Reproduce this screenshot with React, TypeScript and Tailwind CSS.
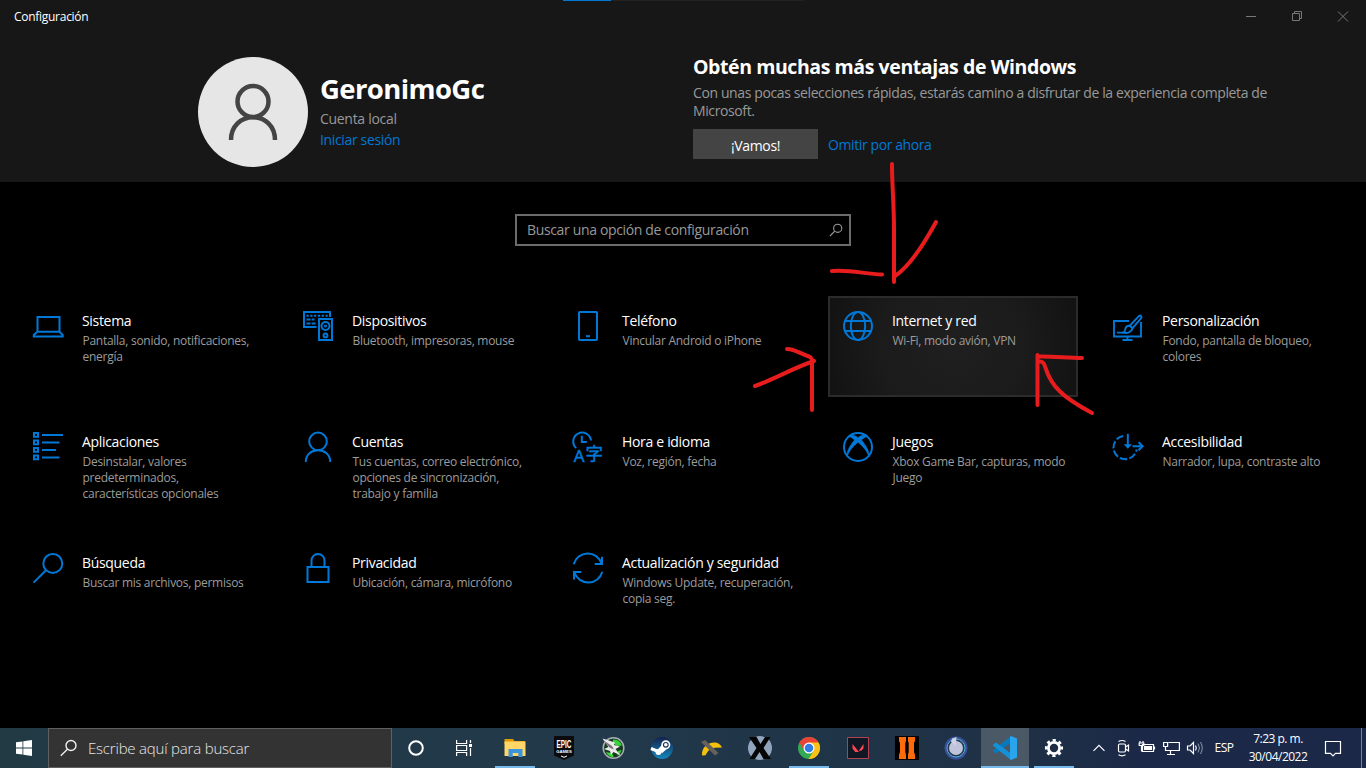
import React from "react";

const Svg = ({ children, sw = 2 }: { children: React.ReactNode; sw?: number }) => (
  <svg className="block h-8 w-8 shrink-0 overflow-visible text-[#0078d7]" viewBox="0 0 32 32" fill="none" stroke="currentColor" strokeWidth={sw}>
    {children}
  </svg>
);

const icons: Record<string, React.ReactNode> = {
  laptop: (
    <Svg>
      <path d="M5.500 22V7h22v15M5.200 21.800h22.300l3.200 3.200v1.500H1.800v-1.500z" />
    </Svg>
  ),
  devices: (
    <Svg>
      <path d="M14.500 17H2V2h26v5" />
      <path d="M4.500 5.800h22" strokeDasharray="2.200 1.600" />
      <path d="M4.500 9.500h8M4.500 13.400h9" strokeDasharray="4 1.200" />
      <path d="M17 9h13v21H17z" />
      <circle cx="23.500" cy="16" r="4" />
      <circle cx="23.500" cy="16" r=".6" />
      <circle cx="23.500" cy="25.400" r="1.900" />
    </Svg>
  ),
  phone: (
    <Svg>
      <rect x="7" y="2" width="18" height="28" rx=".8" />
      <path d="M14 26.200h4" />
    </Svg>
  ),
  globe: (
    <Svg>
      <circle cx="16" cy="16" r="14" />
      <ellipse cx="16" cy="16" rx="7.200" ry="14" />
      <path d="M3 11h26M3 21h26" />
    </Svg>
  ),
  personalize: (
    <Svg sw={1.9}>
      <path d="M17 11H2v15.500h27V12M15.500 26.500v4M10.500 30h10M5 22.600h6" />
      <path d="M18 15.500 26.800 6.200c2-1.600 3.600.5 2.200 2.200l-8.400 9.800z" />
      <path d="M17.800 15.800c-3-.3-4.300 1.600-4.600 3.800-.2 1.600-1.200 2.600-2.400 3 4.200 1 8.900-.1 9.600-4.400z" />
    </Svg>
  ),
  apps: (
    <Svg>
      <path d="M2 2h4v3.800H2zM2 9.500h4v3.800H2zM2 17h4v3.800H2zM2 24.500h4v3.800H2zM10 4h21M10 11.500h17.500M10 19h14M10 26.500h17.500" />
    </Svg>
  ),
  person: (
    <Svg>
      <circle cx="16" cy="10.400" r="8.800" />
      <path d="M3.800 31C3.800 23.500 9.500 19.300 16 19.300S28.200 23.500 28.200 31" />
    </Svg>
  ),
  time: (
    <Svg>
      <path d="M4.200 17.100A8.900 8.900 0 1 1 19 9.500M9.800 4.800v6.200h5" />
      <text x="1.800" y="30.500" fontSize="17" fill="currentColor" stroke="currentColor" strokeWidth=".6" fontFamily="Open Sans, sans-serif">A</text>
      <text x="13.600" y="29" fontSize="17.500" fill="currentColor" stroke="currentColor" strokeWidth=".5" fontFamily="Noto Sans CJK JP, sans-serif">字</text>
    </Svg>
  ),
  xbox: (
    <Svg>
      <circle cx="16" cy="16" r="14" />
      <path d="M7 4.500c3-1 6.500 0 9 2.200 2.500-2.200 6-3.200 9-2.200l.5 1.300c-1.800-.3-4 1-6 3.300 4.500 5.400 8.200 11.500 7.400 16.700C25.500 20.500 20.500 14.900 16 11.300 11.500 14.900 6.500 20.500 5.100 25.800 4.300 20.600 8 14.500 12.500 9.100c-2-2.300-4.200-3.600-6-3.300z" fill="currentColor" strokeWidth=".6" />
    </Svg>
  ),
  access: (
    <Svg>
      <path d="M11.200 4.900A11.700 11.700 0 1 0 24.700 18.500" strokeDasharray="7.500 2.200" />
      <path d="M15.800 2.800v12.400" />
      <path d="M11.600 13.200h8.400L15.800 17.700z" fill="currentColor" stroke="none" />
      <path d="M20.500 15.200h8M26.600 11.200l4 4-4 4" />
    </Svg>
  ),
  search: (
    <Svg>
      <circle cx="20.800" cy="11.400" r="9.500" />
      <path d="m14 18.200-12.400 12.400" />
    </Svg>
  ),
  lock: (
    <Svg>
      <path d="M5.500 15h21v15h-21zM9.500 15V8.500a6.500 6.500 0 0 1 13 0V15" />
    </Svg>
  ),
  update: (
    <Svg>
      <path d="M1.700 12.200A14.500 14.500 0 0 1 29.500 11.500M30 4.800V12h-7.300M30.300 19.800A14.500 14.500 0 0 1 2.500 20.500M2 27.500V20h7.300" />
    </Svg>
  ),
};

type Tile = { icon: string; title: string; desc: string[]; active?: boolean };

const tiles: Tile[] = [
  { icon: "laptop", title: "Sistema", desc: ["Pantalla, sonido, notificaciones,", "energía"] },
  { icon: "devices", title: "Dispositivos", desc: ["Bluetooth, impresoras, mouse"] },
  { icon: "phone", title: "Teléfono", desc: ["Vincular Android o iPhone"] },
  { icon: "globe", title: "Internet y red", desc: ["Wi-Fi, modo avión, VPN"], active: true },
  { icon: "personalize", title: "Personalización", desc: ["Fondo, pantalla de bloqueo,", "colores"] },
  { icon: "apps", title: "Aplicaciones", desc: ["Desinstalar, valores", "predeterminados,", "características opcionales"] },
  { icon: "person", title: "Cuentas", desc: ["Tus cuentas, correo electrónico,", "opciones de sincronización,", "trabajo y familia"] },
  { icon: "time", title: "Hora e idioma", desc: ["Voz, región, fecha"] },
  { icon: "xbox", title: "Juegos", desc: ["Xbox Game Bar, capturas, modo", "Juego"] },
  { icon: "access", title: "Accesibilidad", desc: ["Narrador, lupa, contraste alto"] },
  { icon: "search", title: "Búsqueda", desc: ["Buscar mis archivos, permisos"] },
  { icon: "lock", title: "Privacidad", desc: ["Ubicación, cámara, micrófono"] },
  { icon: "update", title: "Actualización y seguridad", desc: ["Windows Update, recuperación,", "copia seg."] },
];

function SettingTile({ tile }: { tile: Tile }) {
  return (
    <div
      className={
        tile.active
          ? "-ml-px mr-px flex h-[101px] border-2 border-[#2b2b2b] bg-[radial-gradient(circle_at_50%_50%,#1f1f1f_0%,#1b1b1b_55%,#121212_100%)] pt-3 pl-3"
          : "flex h-[101px] pt-3.5 pl-[13px]"
      }
    >
      {icons[tile.icon]}
      <div className="ml-[18px] whitespace-nowrap">
        <div className="pt-px text-[14px] leading-5 tracking-[-0.32px] text-white">{tile.title}</div>
        <div className="mt-0.5 pl-[0.5px] text-[12px] leading-4 tracking-[-0.27px] text-[#9c9c9c]">
          {tile.desc.map((line) => (
            <div key={line}>{line}</div>
          ))}
        </div>
      </div>
    </div>
  );
}

function Header() {
  return (
    <header className="flex h-[182px] flex-col bg-[#171717]">
      <div className="flex h-8 items-start">
        <span className="w-[563px] pt-[9px] pl-3.5 text-[12px] leading-4 tracking-[-0.28px] text-white">Configuración</span>
        <div className="flex h-0.5 w-[241px]">
          <div className="h-px w-12 bg-[#0078d7]" />
          <div className="h-px flex-1 bg-[#222]" />
        </div>
        <svg className="ml-auto h-8 w-[138px]" viewBox="0 0 138 32" fill="none" stroke="#777" strokeWidth="1">
          <path d="M18 16.500h10M64.500 13.500h7v7h-7zM66.500 13.500v-2h7v7h-2M110 11.500l10 10M120 11.500l-10 10" />
        </svg>
      </div>
      <div className="flex pl-[198px]">
        <div className="mt-[25px] h-[110px] w-[110px] rounded-full bg-[#e6e6e6]">
          <svg viewBox="0 0 110 110" fill="none" stroke="#444" strokeWidth="4.500">
            <circle cx="55" cy="44.500" r="15.500" />
            <path d="M33 83c0-14 10-22.800 22-22.800S77 69 77 83" />
          </svg>
        </div>
        <div className="w-[385px] pt-[37px] pl-3">
          <div className="text-[27.5px] leading-10 font-bold tracking-[-0.6px] text-white">GeronimoGc</div>
          <div className="mt-px text-[14px] leading-[18px] tracking-[-0.3px] text-[#999]">Cuenta local</div>
          <div className="mt-[3px] text-[14px] leading-[18px] tracking-[-0.35px] text-[#0078d7]">Iniciar sesión</div>
        </div>
        <div className="pt-5 whitespace-nowrap">
          <div className="text-[19.5px] leading-[30px] font-bold tracking-[-0.42px] text-white">Obtén muchas más ventajas de Windows</div>
          <div className="mt-0.5 text-[14px] leading-[18px] tracking-[-0.385px] text-[#999]">
            <div>Con unas pocas selecciones rápidas, estarás camino a disfrutar de la experiencia completa de</div>
            <div>Microsoft.</div>
          </div>
          <div className="mt-[9px] flex items-center">
            <button className="h-[30px] w-[125px] bg-[#444] pt-0.5 text-[14px] tracking-[-0.35px] text-white">¡Vamos!</button>
            <a className="ml-2.5 text-[14px] tracking-[-0.4px] text-[#0078d7]">Omitir por ahora</a>
          </div>
        </div>
      </div>
    </header>
  );
}

const appIcons: { name: string; bar?: boolean; active?: boolean; art: React.ReactNode }[] = [
  {
    name: "explorer",
    bar: true,
    art: (
      <>
        <path d="M1.500 3h8.500l1.500 2H22v3H1.500z" fill="#e09a00" />
        <path d="M1.500 5.500h21V20h-21z" fill="#ffd667" />
        <path d="M5.500 21v-8h14v8h-4.200v-4h-5.600v4z" fill="#3a95dc" />
      </>
    ),
  },
  {
    name: "epic",
    art: (
      <>
        <path d="M2.500 0h19Q22 0 22 1v18.500L12 24 2 19.500V1q0-1 .5-1z" fill="#0b0b0d" />
        <text x="0" y="0" transform="translate(12 11.800) scale(.8 1.300)" textAnchor="middle" fontSize="8" fontWeight="700" fill="#fff" fontFamily="Liberation Sans, sans-serif">EPIC</text>
        <text x="12" y="17" textAnchor="middle" fontSize="4.200" fontWeight="700" fill="#fff" fontFamily="Liberation Sans, sans-serif">GAMES</text>
        <path d="m9 20 3 1.300 3-1.300" stroke="#fff" fill="none" />
      </>
    ),
  },
  {
    name: "afterburner",
    art: (
      <>
        <circle cx="12.500" cy="12" r="10.300" fill="#173a20" stroke="#a9aeb0" strokeWidth="1.500" />
        <path d="M12 3.500a9 9 0 0 1 9 6l-5 .5-4-3zM5 16c2 4 5 5.500 8 5.300l-2-4zM17 15l3.500-1a9 9 0 0 1-4 6z" fill="#36d43c" />
        <path d="M1.500 2.500 14 6.500l-1 2.500 6 1.500-4.500 2.500 5 6.500-7-3.500-2.500 3-1-4-6-2 4.500-2z" fill="#eceaea" />
        <path d="m2 4 9 6 2 3.500-4-1.500z" fill="#77757b" />
      </>
    ),
  },
  {
    name: "steam",
    art: (
      <>
        <defs>
          <linearGradient id="steam" x2="0" y2="1"><stop stopColor="#14214d" /><stop offset="1" stopColor="#1589bd" /></linearGradient>
        </defs>
        <circle cx="12" cy="12" r="11" fill="url(#steam)" />
        <path d="m1 12.500 7 3 4.500-5L15 12.500l-4 3.500" stroke="#fff" strokeWidth="3" fill="none" />
        <circle cx="15.800" cy="8.800" r="3.700" fill="#17315d" stroke="#fff" strokeWidth="1.600" />
        <circle cx="15.800" cy="8.800" r="1.800" fill="#fff" />
        <circle cx="8.500" cy="16" r="3" fill="#fff" />
      </>
    ),
  },
  {
    name: "banana",
    art: (
      <>
        <path d="M3 19.500C2.500 12 8 6.500 15.500 6.500c3 0 6 1.500 7.500 5l-7 .3c-5 .5-7 3.200-9.500 7.400z" fill="#f4c20d" />
        <path d="m2 6 4-2 13.500 13-3.500 2.500z" fill="#68615b" />
      </>
    ),
  },
  {
    name: "xsplit",
    art: (
      <>
        <circle cx="12" cy="12" r="12" fill="#93a4bd" />
        <path d="M1 1h7.500l4 7L17 1h5.500l-7 11L23 23h-7.500l-4-7L7 23H1.500l7-11z" fill="#050505" />
      </>
    ),
  },
  {
    name: "chrome",
    bar: true,
    art: (
      <>
        <circle cx="12" cy="12" r="11" fill="#34a853" />
        <path d="M12 12 2.470 6.500A11 11 0 0 1 21.530 6.500z" fill="#ea4335" />
        <path d="M12 6.500h9.530A11 11 0 0 1 11.500 23L16.760 14.750z" fill="#fbc116" />
        <path d="M2.470 6.500 7.240 14.750 12 12V6.500z" fill="#ea4335" />
        <circle cx="12" cy="12" r="5.500" fill="#fff" />
        <circle cx="12" cy="12" r="4.300" fill="#2f7de9" />
      </>
    ),
  },
  {
    name: "valorant",
    art: (
      <>
        <path d="M1.500 1.500h21v21h-21z" fill="#101823" stroke="#b04353" />
        <path d="m6.500 8 6.500 8h-3.800L6.500 12.500zM17.500 8v4.300L15.500 14.800H12.800z" fill="#ff4655" />
      </>
    ),
  },
  {
    name: "blackops",
    art: (
      <>
        <path d="M0 0h24v24H0z" fill="#000" />
        <path d="M4 1h7v4l-.7 2v9l.7 3v4H4v-4l1-3V7L4 5zM13 1h7v4l-1 2v9l1 3v4h-7v-4l.7-3V7l-.7-2z" fill="#ff6a0b" />
      </>
    ),
  },
  {
    name: "daemon",
    art: (
      <>
        <circle cx="12" cy="12" r="11.500" fill="#38509a" />
        <circle cx="12" cy="12" r="9" fill="#26334f" stroke="#50b4cc" strokeWidth="1" />
        <circle cx="12" cy="12" r="7" fill="#bfc4da" />
        <path d="M8 2.500 12.500 1 12 10 7 6z" fill="#cdd3e4" />
      </>
    ),
  },
  {
    name: "vscode",
    bar: true,
    active: true,
    art: (
      <>
        <path d="M18 0v6.500L3 17.500.2 15.500v-1.300z" fill="#0879bd" />
        <path d="M.2 8.500 3 6.500l15 11V24L.2 9.800z" fill="#1591d9" />
        <path d="m18 0 6 2.500v19L18 24l-1-1V1z" fill="#28a5ed" />
      </>
    ),
  },
  {
    name: "settings",
    bar: true,
    art: (
      <>
        <circle cx="12" cy="12" r="7.800" stroke="#fff" strokeWidth="2.600" fill="none" strokeDasharray="3.100 3.026" transform="rotate(-11.400 12 12)" />
        <circle cx="12" cy="12" r="5.600" stroke="#fff" strokeWidth="2.800" fill="none" />
      </>
    ),
  },
];

function Taskbar() {
  return (
    <footer className="flex h-10 bg-[linear-gradient(90deg,#223a44_0%,#21394a_45%,#1f3045_75%,#1b2848_84%,#1b2848_100%)] text-white">
      <div className="flex w-12 items-center justify-center">
        <svg className="h-4 w-4" viewBox="0 0 16 16" fill="#fff">
          <path d="M0 2.300 6.500 1.400v6.200H0zM7.300 1.300 16 0v7.600H7.300zM0 8.400h6.500v6.200L0 13.700zM7.300 8.400H16V16l-8.700-1.300z" />
        </svg>
      </div>
      <div className="flex w-[344px] items-center border border-[#606060] bg-[#333] pl-[11px]">
        <svg className="h-[18px] w-[18px]" viewBox="0 0 18 18" fill="none" stroke="#eee" strokeWidth="1.400">
          <circle cx="11" cy="6.500" r="5" />
          <path d="m7.400 10.200-6.600 6.600" />
        </svg>
        <span className="ml-2.5 text-[15px] font-light tracking-[-0.2px] text-[#e8e8e8]">Escribe aquí para buscar</span>
      </div>
      <div className="flex w-12 items-center justify-center">
        <svg className="h-4 w-4" viewBox="0 0 16 16" fill="none" stroke="#fff" strokeWidth="2">
          <circle cx="8" cy="8" r="6.800" />
        </svg>
      </div>
      <div className="flex w-12 items-center justify-center">
        <svg className="h-4 w-4" viewBox="0 0 16 16" fill="none" stroke="#fff" strokeWidth="1.200">
          <path d="M.6 0v3.500h10V0M.6 16v-3.500h10V16M.6 5.500h10v5H.6zM14.500 0v3M14.500 8v8" />
          <path d="M13 4h3v3h-3z" fill="#fff" stroke="none" />
        </svg>
      </div>
      <div className="ml-[3px] flex gap-px">
        {appIcons.map((a) => (
          <div key={a.name} className={a.active ? "flex w-12 flex-col items-center bg-[#4b5966]" : "flex w-12 flex-col items-center"}>
            <svg className="mt-2 block h-6 w-6 overflow-visible" viewBox="0 0 24 24">{a.art}</svg>
            {a.bar && <div className={a.active ? "mt-1.5 h-0.5 w-12 bg-[#76b9ed]" : "mt-1.5 h-0.5 w-10 bg-[#76b9ed]"} />}
          </div>
        ))}
      </div>
      <div className="ml-[9px] flex items-center">
        <svg className="h-10 w-[120px]" viewBox="0 0 120 40" fill="none" stroke="#fff" strokeWidth="1.200">
          <path d="m6.500 22.800 5.500-5.500 5.500 5.500" />
          <rect x="31.500" y="16" width="7" height="8" rx="1.200" />
          <path d="m38.500 19 3-2v6l-3-2M31.500 13.500q3.500-2 7 0M31.500 26.800q3.500 2 7 0" />
          <path d="M55.500 16.500h11v7h-11zM67.500 18.500v3" />
          <path d="M57 18h8v4h-8z" fill="#fff" stroke="none" />
          <path d="M53 15v-2M56 15v-2M52.200 15h4.600v2.500h-4.600zM54.500 18v5.500" />
          <path d="M81.500 14.500h10.900v8H78.500v-3.500M83.500 22.500V26M80 26.500h8M76.600 14.500h4v4h-4z" />
          <path d="M100.500 18h2.500l3.500-3.500v11L103 22h-2.500zM108.500 17.500q1.600 2.500 0 5" />
          <path d="M111 15.500q3 4.500 0 9M113.500 14q3.500 6 0 12" stroke="#8c97ab" strokeWidth="1" />
        </svg>
        <div className="w-[34px] text-center text-[12px] tracking-[-0.5px]">ESP</div>
        <div className="w-[74px] pb-px text-center text-[12px] leading-[18px] tracking-[-0.5px] whitespace-nowrap">
          <div>7:23 p. m.</div>
          <div>30/04/2022</div>
        </div>
        <svg className="ml-[9px] h-[18px] w-[18px]" viewBox="0 0 18 18" fill="none" stroke="#fff" strokeWidth="1.200">
          <path d="M1.500 2.500h15v11.800h-5L9 16.800l-2.500-2.500h-5z" />
        </svg>
        <div className="ml-[19px] h-10 w-px bg-[#7a8497]" />
      </div>
    </footer>
  );
}

export default function App() {
  return (
    <div className="relative flex h-[768px] w-[1366px] flex-col overflow-hidden bg-black font-['Open_Sans','Noto_Sans',sans-serif]">
      <Header />
      <main className="flex flex-1 flex-col items-center pt-8">
        <div className="flex h-8 w-[336px] items-center justify-between border-2 border-[#6b6b6b] pr-1.5 pl-2.5">
          <span className="pb-0.5 text-[14px] tracking-[-0.35px] text-[#999]">Buscar una opción de configuración</span>
          <svg className="h-3.5 w-3.5" viewBox="0 0 14 14" fill="none" stroke="#999" strokeWidth="1.100">
            <circle cx="8.700" cy="5.300" r="4.100" />
            <path d="M5.700 8.200 1 13" />
          </svg>
        </div>
        <div className="mt-[50px] grid w-[1328px] grid-cols-[repeat(5,250px)] gap-x-5 gap-y-5">
          {tiles.map((t) => (
            <SettingTile key={t.title} tile={t} />
          ))}
        </div>
      </main>
      <Taskbar />
      <svg className="pointer-events-none absolute inset-0 h-full w-full" viewBox="0 0 1366 768" fill="none" stroke="#e81c1c" strokeWidth="4" strokeLinecap="round" strokeLinejoin="round">
        <path d="M892 164c0 22 2 40 2 66v52M832 271c18-1.500 33 3 50 3.500M936 222c-12 22-26 44-41 54" />
        <path d="M787 349c8 0 14 5 22 7.500 3 1 3 3 3 7V410M755 386c20-7 38-18 59-25" />
        <path d="M1037.500 355v50M1038 356.500c15-.5 29 1.500 44 1.500M1040 361.500c8 0 2 13 20 30 9 9 20 15 32 21.500" />
      </svg>
    </div>
  );
}
